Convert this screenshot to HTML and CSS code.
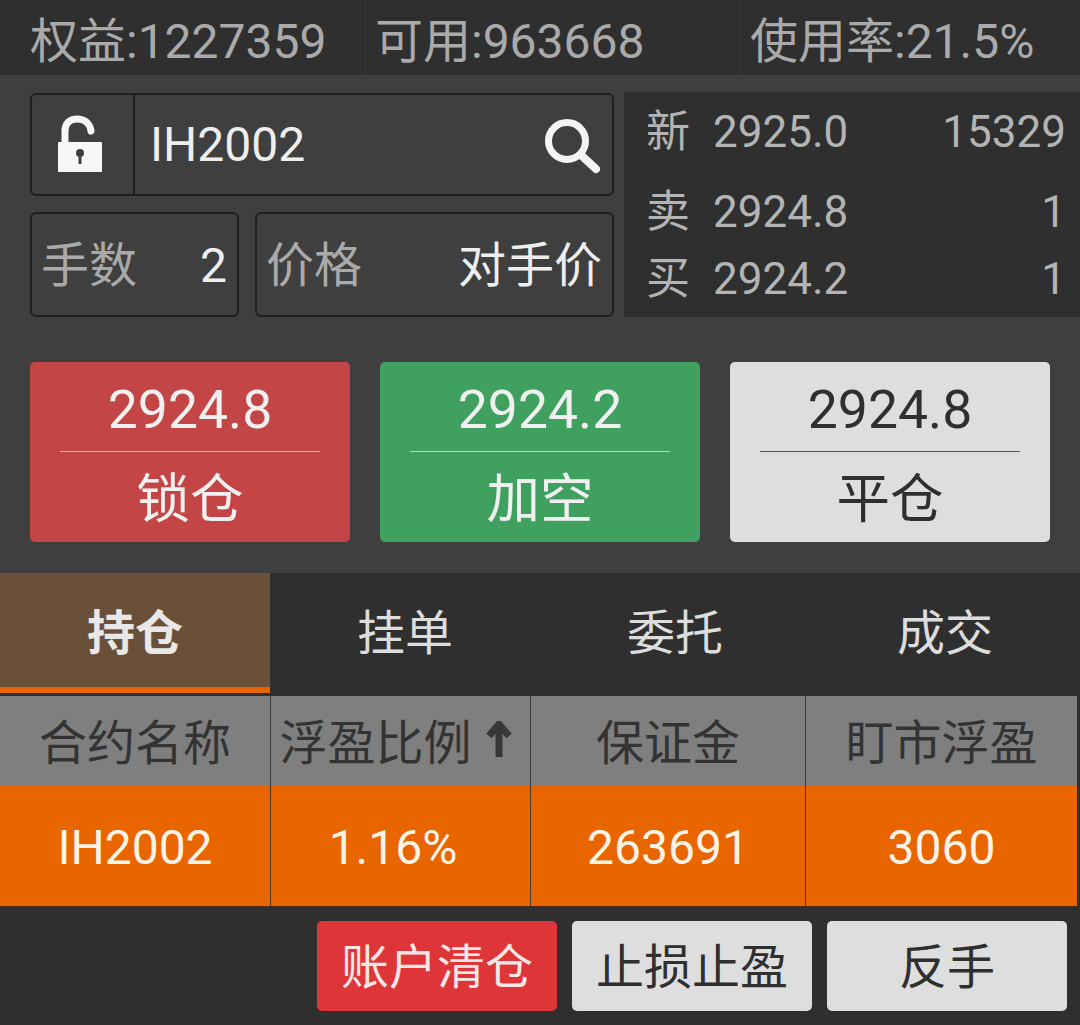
FILE: index.html
```html
<!DOCTYPE html>
<html lang="zh-CN">
<head>
<meta charset="utf-8">
<title>交易</title>
<link rel="stylesheet" href="styles.css">
</head>
<body>
<div class="app">
  <header class="account">
    <div class="stat stat-a">权益:1227359</div>
    <div class="stat stat-b">可用:963668</div>
    <div class="stat stat-c">使用率:21.5%</div>
  </header>
  <section class="order">
    <div class="order-top">
      <div class="form">
        <div class="field symbol">
          <div class="lock">
            <svg width="46" height="58" viewBox="0 0 46 58"><path class="shackle" d="M8 28V16C8 8 13 4 20 4s13 4 14 12"/><path class="lock-body" d="M2 27h42a1 1 0 0 1 1 1v28a1 1 0 0 1-1 1H2a1 1 0 0 1-1-1V28a1 1 0 0 1 1-1z"/><circle class="keyhole" cx="23" cy="38" r="4"/><rect class="keyhole" x="21.5" y="39" width="3" height="10"/></svg>
          </div>
          <div class="symbol-name">IH2002</div>
          <svg class="search" width="56" height="56" viewBox="0 0 56 56"><circle class="search-ring" cx="22" cy="22" r="18.5"/><path class="search-handle" d="M37 37l14 13"/></svg>
        </div>
        <div class="form-row">
          <div class="field qty"><span class="field-label">手数</span><span class="field-value">2</span></div>
          <div class="field price"><span class="field-label">价格</span><span class="field-value">对手价</span></div>
        </div>
      </div>
      <div class="quote">
        <div class="quote-row quote-new"><span class="quote-label">新</span><span class="quote-price">2925.0</span><span class="quote-vol">15329</span></div>
        <div class="quote-row"><span class="quote-label">卖</span><span class="quote-price">2924.8</span><span class="quote-vol">1</span></div>
        <div class="quote-row"><span class="quote-label">买</span><span class="quote-price">2924.2</span><span class="quote-vol">1</span></div>
      </div>
    </div>
    <div class="actions">
      <div class="action action-red"><div class="action-price">2924.8</div><div class="action-name">锁仓</div></div>
      <div class="action action-green"><div class="action-price">2924.2</div><div class="action-name">加空</div></div>
      <div class="action action-light"><div class="action-price">2924.8</div><div class="action-name">平仓</div></div>
    </div>
  </section>
  <nav class="tabs">
    <div class="tab tab-active">持仓</div>
    <div class="tab">挂单</div>
    <div class="tab">委托</div>
    <div class="tab">成交</div>
  </nav>
  <div class="table">
    <div class="th">合约名称</div>
    <div class="th th-sorted">浮盈比例<svg class="sort" width="26" height="38" viewBox="0 0 26 38"><path d="M13 36V4M3 15L13 3l10 12"/></svg></div>
    <div class="th">保证金</div>
    <div class="th">盯市浮盈</div>
    <div class="td">IH2002</div>
    <div class="td td-sorted">1.16%</div>
    <div class="td">263691</div>
    <div class="td">3060</div>
  </div>
  <footer class="footer">
    <div class="foot-btn foot-red">账户清仓</div>
    <div class="foot-btn">止损止盈</div>
    <div class="foot-btn">反手</div>
  </footer>
</div>
</body>
</html>
```
FILE: styles.css
```css
* { box-sizing: border-box; }
html, body { margin: 0; padding: 0; }
body {
  width: 1080px;
  height: 1025px;
  overflow: hidden;
  background: #2f2f2f;
  font-family: Roboto, "Noto Sans CJK SC", sans-serif;
  font-size: 48px;
}
.app { display: flex; flex-direction: column; width: 1080px; height: 1025px; }

.account { display: flex; height: 75px; background: #2f2f2f; color: #aaaaaa; flex: none; }
.stat { line-height: 83px; border-right: 1px solid #383838; white-space: nowrap; }
.stat-a { width: 366px; padding-left: 30px; }
.stat-b { width: 375px; padding-left: 9px; }
.stat-c { flex: 1; padding-left: 9px; border-right: 0; }

.order { background: #3f3f3f; height: 498px; padding-top: 17px; flex: none; }
.order-top { display: flex; padding-left: 30px; height: 225px; }
.form { width: 584px; display: flex; flex-direction: column; gap: 16px; padding-top: 1px; }
.field {
  display: flex;
  align-items: center;
  height: 103px;
  border: 2px solid #1f1f1f;
  border-radius: 6px;
  background: #3f3f3f;
}
.symbol { color: #eeeeee; }
.lock {
  width: 103px;
  height: 100%;
  flex: none;
  display: flex;
  align-items: center;
  justify-content: center;
  border-right: 2px solid #1f1f1f;
  padding: 0 5px 2px 0;
}
.shackle { fill: none; stroke: #f7f7f7; stroke-width: 7; stroke-linecap: round; }
.lock-body { fill: #f7f7f7; }
.keyhole { fill: #3f3f3f; }
.symbol-name { flex: 1; padding-left: 15px; line-height: 102px; }
.search { flex: none; margin-right: 11px; margin-top: 4px; }
.search-ring { fill: none; stroke: #f4f4f4; stroke-width: 7; }
.search-handle { fill: none; stroke: #f4f4f4; stroke-width: 8; stroke-linecap: round; }
.form-row { display: flex; gap: 16px; }
.form-row .field { height: 105px; justify-content: space-between; padding: 3px 10px 0 9px; line-height: 60px; }
.qty { width: 209px; }
.price { flex: 1; }
.field-label { color: #aaaaaa; }
.field-value { color: #eeeeee; }

.quote {
  width: 456px;
  margin-left: 10px;
  background: #2f2f2f;
  color: #b4b4b4;
  padding: 7px 14px 0 22px;
  font-size: 44px;
  display: flex;
  flex-direction: column;
}
.quote-row { display: flex; height: 67px; line-height: 67px; }
.quote-new { margin-bottom: 13px; }
.quote-label { width: 67px; flex: none; }
.quote-vol { flex: 1; text-align: right; }

.actions { display: flex; gap: 30px; padding: 45px 30px 0; }
.action { width: 320px; height: 180px; border-radius: 5px; padding: 0 30px; text-align: center; font-size: 53.5px; color: #f0f0f0; }
.action-price { height: 90px; line-height: 95px; border-bottom: 1px solid rgba(255, 255, 255, .6); }
.action-name { line-height: 96px; }
.action-red { background: #c44545; }
.action-green { background: #3fa060; }
.action-light { background: #dedede; color: #2f2f2f; }
.action-light .action-price { border-bottom-color: #555555; }

.tabs { display: grid; grid-template-columns: repeat(4, 270px); grid-template-rows: 120px; height: 120px; background: #2f2f2f; flex: none; }
.tab { text-align: center; line-height: 122px; color: #dddddd; }
.tab-active { background: #6a4f39; border-bottom: 6px solid #e96500; font-weight: 700; color: #e8e8e8; }

.table {
  display: grid;
  grid-template-columns: 270px 259px 274px 271px;
  grid-template-rows: 90px 120px;
  column-gap: 1px;
  margin-top: 3px;
  width: 1077px;
  background: #3a3a3a;
  border-bottom: 1px solid #4a2c14;
  height: 211px;
  flex: none;
}
.th { background: #7f7f7f; color: #333333; display: flex; align-items: center; justify-content: center; gap: 14px; padding-top: 5px; line-height: 60px; }
.th-sorted { padding-right: 10px; }
.sort { fill: none; stroke: #383838; stroke-width: 7; flex: none; margin-top: -8px; }
.td { background: #e96500; color: #fbf3e6; text-align: center; line-height: 124px; }
.td-sorted { padding-right: 15px; }

.footer { display: flex; justify-content: flex-end; gap: 15px; padding: 14px 13px 0 0; }
.foot-btn { width: 240px; height: 90px; border-radius: 5px; background: #dedede; color: #2f2f2f; text-align: center; line-height: 94px; }
.foot-red { background: #de3539; color: #f6e6e6; }
```
